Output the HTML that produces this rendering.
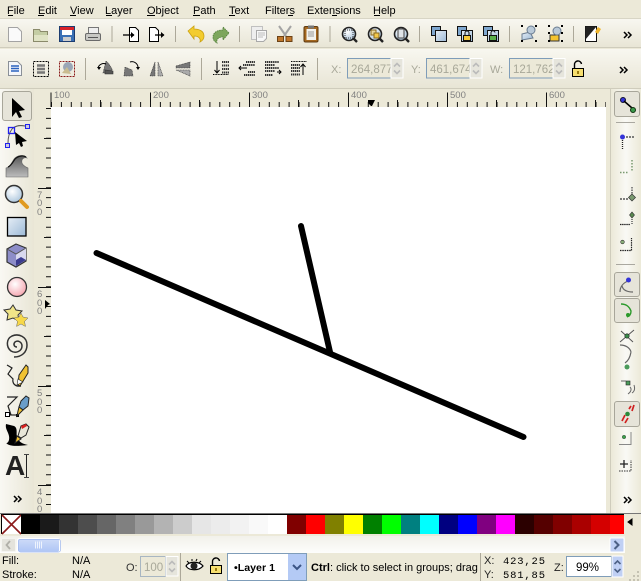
<!DOCTYPE html>
<html><head><meta charset="utf-8"><style>
html,body{margin:0;padding:0;background:#ece9d8}
svg{display:block}
text{font-family:"Liberation Sans",sans-serif;font-size:11px;fill:#000}
.g{fill:#a8a899}
.r{font-size:9.500px;fill:#808080}
.sep{stroke:#aca899;stroke-width:1}
</style></head><body>
<svg width="641" height="581" viewBox="0 0 641 581" xmlns="http://www.w3.org/2000/svg">
<defs>
<linearGradient id="bar" x1="0" y1="0" x2="0" y2="1"><stop offset="0" stop-color="#f8f7f0"/><stop offset="1" stop-color="#e8e5d5"/></linearGradient>
<linearGradient id="side" x1="0" y1="0" x2="1" y2="0"><stop offset="0" stop-color="#f9f8f3"/><stop offset="1" stop-color="#e9e6d6"/></linearGradient>
<linearGradient id="side2" x1="0" y1="0" x2="1" y2="0"><stop offset="0" stop-color="#ece9d8"/><stop offset=".5" stop-color="#f9f9f5"/><stop offset="1" stop-color="#ece9d8"/></linearGradient>
<linearGradient id="blue" x1="0" y1="0" x2="1" y2="1"><stop offset="0" stop-color="#e6eef6"/><stop offset="1" stop-color="#9cb9d6"/></linearGradient>
<linearGradient id="scroll" x1="0" y1="0" x2="0" y2="1"><stop offset="0" stop-color="#cfdcf8"/><stop offset="1" stop-color="#aec5f5"/></linearGradient>
<linearGradient id="sb" x1="0" y1="0" x2="0" y2="1"><stop offset="0" stop-color="#f2f1ea"/><stop offset="1" stop-color="#fdfdfb"/></linearGradient>
<linearGradient id="wave" x1="0" y1="0" x2="0" y2="1"><stop offset="0" stop-color="#555"/><stop offset="1" stop-color="#bdbdbd"/></linearGradient>
<radialGradient id="pink" cx=".4" cy=".35" r=".7"><stop offset="0" stop-color="#fff"/><stop offset="1" stop-color="#f5a3ad"/></radialGradient>
<radialGradient id="lens" cx=".4" cy=".35" r=".7"><stop offset="0" stop-color="#fff"/><stop offset="1" stop-color="#a9c4dc"/></radialGradient>
<g id="zoomg"><circle cx="8" cy="8" r="6.500" fill="url(#lens)" stroke="#222" stroke-width="1.600"/><path d="M12.500 12.500l3.500 3.500" stroke="#222" stroke-width="2.400"/></g>
<g id="spin"><rect x="0" y="0" width="12" height="19.500" fill="#e6e5dc" stroke="#fff"/><path d="M3 8l3-3 3 3" fill="none" stroke="#bbb" stroke-width="1.600"/><path d="M3 12l3 3 3-3" fill="none" stroke="#bbb" stroke-width="1.600"/></g>
<g id="dbl"><path d="M0 0l3 3-3 3M4 0l3 3-3 3" fill="none" stroke="#000" stroke-width="1.500"/></g>
<g id="lock"><rect x="0.500" y="7.500" width="11" height="8" fill="#f6df70" stroke="#000"/><path d="M2.500 7.500V4a3.500 3.500 0 0 1 7-1" fill="none" stroke="#000" stroke-width="1.400"/><rect x="5" y="10" width="2" height="3" fill="#9a7b10"/></g>
</defs>

<rect width="641" height="581" fill="#ece9d8"/>

<!-- menu -->
<g>
<text x="7" y="14">File</text><path d="M8 15.500h5" stroke="#000"/>
<text x="38" y="14">Edit</text><path d="M38 15.500h6" stroke="#000"/>
<text x="70" y="14">View</text><path d="M70 15.500h6" stroke="#000"/>
<text x="105" y="14">Layer</text><path d="M106 15.500h6" stroke="#000"/>
<text x="147" y="14">Object</text><path d="M147 15.500h8" stroke="#000"/>
<text x="193" y="14">Path</text><path d="M193 15.500h7" stroke="#000"/>
<text x="229" y="14">Text</text><path d="M229 15.500h6" stroke="#000"/>
<text x="265" y="14">Filters</text><path d="M288 15.500h5" stroke="#000"/>
<text x="307" y="14">Extensions</text><path d="M332 15.500h5" stroke="#000"/>
<text x="373" y="14">Help</text><path d="M374 15.500h6" stroke="#000"/>
</g>

<!-- toolbar backgrounds -->
<rect x="0" y="19" width="641" height="29" fill="url(#bar)"/>
<path d="M0 18.500h641" stroke="#d8d5c5"/><path d="M0 47.500h641" stroke="#cfccbc"/>
<rect x="0" y="49" width="641" height="39" fill="url(#bar)"/>
<path d="M0 88.500h641" stroke="#cfccbc"/>

<g class="sep">
<path d="M112 26v16M175.500 26v16M239.500 26v16M330 26v16M419.500 26v16M509.500 26v16M573.500 26v16"/>
<path d="M85.500 58v22M201.500 58v22M317.500 58v22"/>
</g>
<!-- new -->
<path d="M8.500 27.500h9l4 4v10h-13z" fill="#fafafa" stroke="#a3a3a3"/>
<!-- open -->
<path d="M33.500 29.500h6l1 2h7v10h-14z" fill="#c4cda4" stroke="#8a8a6a"/><path d="M34 35h14v6H34z" fill="#dfe3c4"/>
<!-- save -->
<rect x="59.500" y="26.500" width="15" height="15" fill="#3a6fb4" stroke="#1c3c70"/><rect x="60" y="27" width="14" height="3" fill="#d8222a"/><rect x="62" y="30" width="10" height="5" fill="#fff"/><rect x="63" y="37" width="8" height="4" fill="#ccc"/>
<!-- print -->
<rect x="88.500" y="27.500" width="10" height="7" fill="#eee" stroke="#777"/><rect x="85.500" y="33.500" width="15" height="7" rx="1.500" fill="#c8c8c4" stroke="#6a6a6a"/><path d="M88 37.500h10" stroke="#555"/>
<!-- import -->
<path d="M129.500 27.500h6l3 3v11h-9z" fill="#fff" stroke="#000"/><path d="M123 35h11" stroke="#000" stroke-width="1.300"/><path d="M131 32l3.500 3-3.500 3z" fill="#000"/>
<!-- export -->
<path d="M149.500 27.500h6l3 3v11h-9z" fill="#fff" stroke="#000"/><path d="M155 35h9" stroke="#000" stroke-width="1.300"/><path d="M161 32l3.500 3-3.500 3z" fill="#000"/>
<!-- undo -->
<path d="M188 31l6-5v3c5 0 10 2 10 7 0 3-2 5-4 6 1-3-1-6-6-6v3z" fill="#f3cc2e" stroke="#c9a010" stroke-width=".8"/>
<!-- redo -->
<path d="M229 33l-6-6v3c-5 0-10 2-10 7 0 3 2 5 4 6-1-3 1-6 6-6v3z" fill="#7da65c" stroke="#4f7c38" stroke-width=".8" stroke-dasharray="1.500 .8"/>
<!-- copy -->
<rect x="251.500" y="26.500" width="11" height="13" fill="#eee" stroke="#c0c0c0"/><path d="M256.500 30.500h10v8l-3 3h-7z" fill="#f8f8f8" stroke="#a9a9a9"/><path d="M258 33h7M258 35h7M258 37h5" stroke="#bbb"/>
<!-- cut -->
<path d="M279 26l7 10M291 26l-7 10" stroke="#a4a4a4" stroke-width="2"/><rect x="277.500" y="36.500" width="6" height="5" fill="#c0762a" stroke="#6b4216"/><rect x="286" y="36.500" width="6" height="5" fill="#c0762a" stroke="#6b4216"/>
<!-- paste -->
<rect x="304" y="26.500" width="14" height="15.500" rx="1.500" fill="#a5681f" stroke="#5e3a10"/><rect x="306.500" y="29" width="9.500" height="11" fill="#f2f2ee"/><rect x="308" y="25.500" width="6" height="3" fill="#777"/><path d="M308 32h6M308 34h6M308 36h6" stroke="#999"/>
<!-- zooms -->
<use href="#zoomg" x="341" y="26"/><rect x="345" y="30" width="8" height="8" fill="none" stroke="#333" stroke-dasharray="1 1"/>
<use href="#zoomg" x="367" y="26"/><rect x="371" y="30" width="5" height="5" fill="#e8d8a0" stroke="#8a6a20"/><rect x="374" y="33" width="5" height="5" fill="#f3c84a" stroke="#8a6a20"/>
<use href="#zoomg" x="393" y="26"/><rect x="398" y="29" width="6" height="9" fill="#dfe4e8" stroke="#444"/>
<!-- raise etc -->
<rect x="431.500" y="26.500" width="9" height="9" fill="#7fa7cf" stroke="#111"/><rect x="435.500" y="30.500" width="11" height="11" fill="url(#blue)" stroke="#111"/>
<rect x="457.500" y="26.500" width="9" height="9" fill="#7fa7cf" stroke="#111"/><rect x="461.500" y="30.500" width="11" height="11" fill="url(#blue)" stroke="#111"/><rect x="463.500" y="35.500" width="7" height="5" fill="#f6c93a" stroke="#111"/><path d="M465 35v-2a2 2 0 0 1 4 0v2" fill="none" stroke="#111"/>
<rect x="483.500" y="26.500" width="9" height="9" fill="#7fa7cf" stroke="#111"/><rect x="487.500" y="30.500" width="11" height="11" fill="url(#blue)" stroke="#111"/><rect x="489.500" y="35.500" width="7" height="5" fill="#5cb04a" stroke="#111"/><path d="M491 35v-2a2 2 0 0 1 4-.5" fill="none" stroke="#111"/>
<!-- group -->
<path d="M522 34l8-2 3 6-11 2z" fill="url(#blue)" stroke="#6a7c90"/><circle cx="531" cy="30" r="4" fill="#b9c9d8" stroke="#6a7c90"/>
<path d="M521 26h2M535 26h2M521 41h2M535 41h2" stroke="#000" stroke-width="2"/>
<path d="M550 35h9v6h-9z" fill="#f4c430" stroke="#333"/><circle cx="557" cy="31" r="4" fill="#b9c9d8" stroke="#6a7c90"/>
<path d="M548 26h2M561 26h2M548 41h2M561 41h2M548 33h2M561 33h2" stroke="#000" stroke-width="2"/>
<!-- prefs -->
<rect x="585.500" y="26.500" width="11" height="15" fill="#fff" stroke="#111"/>
<path d="M585.500 26.500h11l-11 13z" fill="#222"/><path d="M598 27l3 2-3 5-3-2z" fill="#f1b62d"/>
<use href="#dbl" x="624" y="32"/>

<!-- toolbar 2 -->
<path d="M8.500 61.500h9l4 4v10h-13z" fill="#f4f6fa" stroke="#8a9098"/><path d="M11 66h8M11 68.500h8M11 71h8" stroke="#2a62c0" stroke-width="1.400"/>
<rect x="33.500" y="61.500" width="15" height="15" fill="none" stroke="#000" stroke-dasharray="2 1"/><path d="M37 65.500h8M37 69h8M37 72.500h8" stroke="#777" stroke-width="2.400"/>
<rect x="59.500" y="61.500" width="15" height="15" fill="none" stroke="#8a1a1a" stroke-dasharray="2 1"/><circle cx="68" cy="67" r="5" fill="#9aa6b6"/><path d="M62 73l5-6 4 7z" fill="#c9bc90"/>
<!-- rotate/flip -->
<g fill="#777" stroke="#333" stroke-width=".6"><path d="M103 73l3-12 3 3 3 5v4z" stroke-dasharray="1 .6"/><path d="M105 74h8v-3l-8-1z" fill="#555"/>
<path d="M124 76l1-9 7 3 1 6z" stroke-dasharray="1 .6"/>
<path d="M155 62v14h-5z" stroke-dasharray="1 .6"/><path d="M158 62v14h5z" fill="#aaa" stroke-dasharray="1 .6"/>
<path d="M176 66l14-4v6h-14z" stroke-dasharray="1 .6"/><path d="M176 70l14 6v-6z" fill="#aaa" stroke-dasharray="1 .6"/></g>
<path d="M98 68a6 6 0 0 1 8-4" fill="none" stroke="#000"/><path d="M97 67l4 0-2 3z"/>
<path d="M130 62a6 6 0 0 1 8 6" fill="none" stroke="#000"/><path d="M136 67h4l-2 3z"/>
<!-- align -->
<g stroke="#000" stroke-width="1" fill="none">
<path d="M217 61v12M214.500 70l2.500 3 2.500-3"/><path d="M213 74.500h16" stroke-dasharray="1 .6"/>
<path d="M239 68h8M241 66l-2 2 2 2"/>
<path d="M303 64v11M300.500 67l2.500-3 2.500 3"/><path d="M291 61.500h16" stroke-dasharray="1 .6"/>
<path d="M277 72h4M279 70l2 2-2 2"/>
</g>
<g stroke="#333" stroke-width="2" stroke-dasharray="1.300 .6">
<path d="M222 62h7M222 65.500h7M222 69h7M222 72.500h7"/>
<path d="M246 62h9M243 65h12M248 72h7M244 75h11"/>
<path d="M265 62h14M265 65h10M265 68h14M265 71h10M265 75h8"/>
<path d="M291 65h9M291 68h9M291 71h9M291 74.500h9"/>
</g>
<!-- XYW -->
<text class="g" x="331" y="73">X:</text><text class="g" x="411" y="73">Y:</text><text class="g" x="490" y="73">W:</text>
<g fill="#ece9d8" stroke="#7f9db9">
<rect x="347.500" y="58.500" width="44" height="19.500"/><rect x="426.500" y="58.500" width="44" height="19.500"/><rect x="509.500" y="58.500" width="44" height="19.500"/>
</g>
<text class="g" x="351" y="73" style="font-size:11.500px">264,877</text>
<text class="g" x="430" y="73" style="font-size:11.500px">461,674</text>
<text class="g" x="513" y="73" style="font-size:11.500px">121,762</text>
<use href="#spin" x="391" y="58.500"/><use href="#spin" x="470" y="58.500"/><use href="#spin" x="553" y="58.500"/>
<use href="#lock" x="572" y="61"/>
<use href="#dbl" x="620" y="67"/>

<!-- left toolbox -->
<rect x="0" y="89" width="34" height="425" fill="url(#side)"/>
<rect x="2.500" y="91.500" width="29" height="29" rx="2.500" fill="#e6e4d9" stroke="#a8a69a"/>
<path d="M12 98v19l4-5 3 6 3-1-3-6 6-1z" fill="#000"/>
<!-- node -->
<path d="M8 143c0-6 1-10 4-14 3-3 8-4 13-3" fill="none" stroke="#555"/>
<rect x="8.500" y="127.500" width="6" height="6" fill="none" stroke="#22e" stroke-width="1.300"/><rect x="25.500" y="124.500" width="4" height="4" fill="#ccd" stroke="#22e"/><rect x="5.500" y="143.500" width="4" height="4" fill="#ccd" stroke="#22e"/>
<path d="M15 132l12 9-5 1 1 4-2 1-2-4-3 2z" fill="#000"/>
<!-- tweak -->
<path d="M6 177V168C10 167 12 162 14 159C17 155 24 154 27 158C24 157 21 159 22 163C23 166 26 167 28 168V177z" fill="url(#wave)" stroke="#666" stroke-width=".6"/>
<path d="M8 167c3-1 5-5 7-8 3-3 8-4 11-2" fill="none" stroke="#111" stroke-width="1.200"/>
<!-- zoom -->
<circle cx="14" cy="194" r="8.500" fill="url(#lens)" stroke="#333" stroke-width="1.500"/><path d="M21 201l6 6" stroke="#e09a20" stroke-width="4" stroke-linecap="round"/>
<!-- rect -->
<rect x="7.500" y="217.500" width="18.500" height="18.500" fill="url(#blue)" stroke="#000" stroke-width="1.300"/>
<!-- 3d -->
<path d="M16 244l10 4v13l-10 6-9-5v-13z" fill="#8d8dc8" stroke="#333" stroke-width="1.200"/><path d="M16 254v12l10-6v-12z" fill="#d9d9ef"/><path d="M16 266l10-6-5-3-5 3z" fill="#3c3c90"/><path d="M7 249l9 5 10-6" fill="none" stroke="#555"/>
<!-- circle -->
<circle cx="17" cy="287" r="9.500" fill="url(#pink)" stroke="#333" stroke-width="1.300"/>
<!-- star -->
<path d="M13 305l3 5 6 1-4 4 1 6-6-3-6 2 1-6-4-4 6-1z" fill="#f0e488" stroke="#333"/>
<path d="M21 313l2 4 5 1-3.500 3.500 1 5-4.500-2.500-4.500 2.500 1-5-3.500-3.500 5-1z" fill="#f7d84a" stroke="#666" stroke-width=".5"/>
<!-- spiral -->
<path d="M17 347c-3 0-4-3-2-5 3-2 7 0 7 4 0 5-6 8-11 5-5-4-5-12 1-15 7-3 15 1 15 9 0 7-5 12-13 12" fill="none" stroke="#333" stroke-width="1.500"/>
<!-- pencil -->
<path d="M7 365l5 3-4 6 5 5c-1 5 3 8 8 7" fill="none" stroke="#222" stroke-width="1.200"/>
<path d="M19 375l7-10 2 2 0 6-8 13-2-1z" fill="#f1c232" stroke="#222"/><path d="M17 385l1-6 5 3z" fill="#fff" stroke="#222" stroke-width=".6"/>
<!-- pen -->
<path d="M7 397h10l-9 9 3 9" fill="none" stroke="#222" stroke-width="1.200"/><rect x="5.500" y="412.500" width="4" height="4" fill="#fff" stroke="#000"/><path d="M10 415h7" stroke="#000"/><rect x="16" y="414" width="3" height="3"/>
<path d="M21 401l5-5 3 2-1 8-5 4-4-3z" fill="#6a9dc9" stroke="#222"/><path d="M19 407l4 3-6 6 1-5z" fill="#f1c232" stroke="#222"/>
<!-- calligraphy -->
<path d="M6 424c-1 5 2 7 3 12 1 5-2 8-3 7 4 4 12 3 22 2-6-1-10-4-11-8-1-4 1-9-3-11z" fill="#000"/>
<path d="M21 426l5-2 3 3-3 8-5 3-3-2z" fill="#e8e6d8" stroke="#222"/><path d="M21 426l5-2 1 2-5 3z" fill="#d82020"/><path d="M17 436l4 3-6 4z" fill="#f1c232" stroke="#222"/>
<!-- text -->
<text x="5" y="475" style="font-size:28px;font-weight:bold;fill:#222">A</text>
<path d="M26.500 455v22" stroke="#222"/><path d="M24 454.500h5M24 477.500h5" stroke="#444"/>
<use href="#dbl" x="14" y="496"/>

<!-- h ruler -->
<rect x="34" y="89" width="577" height="18" fill="#ece9d8"/>
<g stroke="#111">
<path d="M51 104.500H606" stroke-width="5" stroke-dasharray="1 8.900" fill="none"/>
<path d="M51 92.500v14.500M150.500 92.500v14.500M249.500 92.500v14.500M348.500 92.500v14.500M447.500 92.500v14.500M546.500 92.500v14.500"/>
<path d="M100.500 100v7M199.500 100v7M298.500 100v7M397.500 100v7M496.500 100v7M595.500 100v7"/>
</g>
<text class="r" x="54" y="98">100</text><text class="r" x="153" y="98">200</text><text class="r" x="252" y="98">300</text><text class="r" x="351" y="98">400</text><text class="r" x="450" y="98">500</text><text class="r" x="549" y="98">600</text>
<path d="M368 100h7l-3 6h-1l-3-3z" fill="#000"/>

<!-- v ruler -->
<rect x="34" y="107" width="17" height="407" fill="#ece9d8"/>
<g stroke="#111" fill="none">
<path d="M48.500 108V513" stroke-width="5" stroke-dasharray="1 8.900"/>
<path d="M38 188.500h13M38 287.500h13M38 386.500h13M38 485.500h13"/>
<path d="M44 138.500h7M44 237.500h7M44 336.500h7M44 435.500h7"/>
</g>
<text class="r" x="37" y="198">7</text><text class="r" x="37" y="206">0</text><text class="r" x="37" y="215">0</text>
<text class="r" x="37" y="297">6</text><text class="r" x="37" y="306">0</text><text class="r" x="37" y="314">0</text>
<text class="r" x="37" y="396">5</text><text class="r" x="37" y="405">0</text><text class="r" x="37" y="413">0</text>
<text class="r" x="37" y="495">4</text><text class="r" x="37" y="504">0</text><text class="r" x="37" y="512">0</text>
<path d="M45 300l5 4-2 1-3 4z" fill="#000"/>

<!-- canvas -->
<rect x="51" y="107" width="555" height="406" fill="#fff"/>
<g stroke="#000" stroke-width="6" stroke-linecap="round" fill="none">
<path d="M96.500 253L523.500 437"/><path d="M301 226L330 352"/>
</g>

<!-- right side -->
<rect x="606" y="89" width="5" height="425" fill="#ece9d8"/>
<path d="M610.500 89v425" stroke="#cfccbc"/>
<rect x="611" y="89" width="30" height="425" fill="url(#side2)"/>
<g fill="#e6e4d9" stroke="#a8a69a">
<rect x="614.500" y="91.500" width="25" height="25" rx="2.500"/>
<rect x="614.500" y="272.500" width="25" height="24" rx="2.500"/>
<rect x="614.500" y="298.500" width="25" height="24" rx="2.500"/>
<rect x="614.500" y="401.500" width="25" height="25" rx="2.500"/>
</g>
<path d="M616 122.500h19M616 264.500h19" stroke="#aaa8a0"/>
<!-- snap icons -->
<circle cx="623" cy="100" r="2.500" fill="#3434d8" stroke="#113"/><path d="M624 101l8 7" stroke="#000" stroke-width="1.500"/><circle cx="633" cy="110" r="2.500" fill="#3a9a4a" stroke="#131"/>
<circle cx="622.500" cy="137" r="2.500" fill="#3434d8"/><path d="M626 137h9" stroke="#555" stroke-width="1.600" stroke-dasharray="2 1"/><path d="M622.500 140v9" stroke="#222" stroke-width="1.300" stroke-dasharray="1 1"/>
<path d="M620 172.500h9M632 160v12" stroke="#7a9a70" stroke-width="1.500" stroke-dasharray="1.500 1.500"/>
<path d="M620 199h9" stroke="#555" stroke-width="1.500" stroke-dasharray="2 1"/><path d="M632 187v7" stroke="#666" stroke-width="1.500" stroke-dasharray="1.500 1"/><path d="M632 194l3.500 3.500-3.500 3.500-3.500-3.500z" fill="#7a9a70" stroke="#333" stroke-width=".7"/>
<path d="M620 224.500h10" stroke="#222" stroke-width="1.200" stroke-dasharray="1.500 .6"/><path d="M632 212l2.500 3-2.500 3-2.500-3z" fill="#5a8a50" stroke="#333" stroke-width=".6"/><path d="M632 219v5" stroke="#555" stroke-width="1.400" stroke-dasharray="1 1"/>
<circle cx="622.500" cy="242" r="1.800" fill="#8ab07a" stroke="#333" stroke-width=".6"/><path d="M620 250.500h11.500V238" fill="none" stroke="#222" stroke-width="1.200" stroke-dasharray="1.500 .8"/>
<path d="M620 292c0-5 3-9 8-11M622 286c1 4 5 6 11 6" fill="none" stroke="#666" stroke-width="1.200"/><circle cx="628.500" cy="280" r="2.500" fill="#3434d8"/>
<path d="M621 304c5 0 8 2 10 7 0 3-1 5-4 6" fill="none" stroke="#2c9a2c" stroke-width="1.400"/><circle cx="628" cy="315" r="2" fill="#2c9a2c"/>
<path d="M620 342l14-12M621 331l12 11" stroke="#555"/><circle cx="627" cy="336" r="2.200" fill="#3a8a4a" stroke="#222" stroke-width=".6"/>
<path d="M620 345c6 0 10 3 11 7M631 352c-1 6-3 9-6 11" fill="none" stroke="#666" stroke-width="1.200"/><circle cx="627" cy="367" r="2.500" fill="#4a9a5a"/>
<rect x="626" y="381" width="4" height="4" fill="#4a9a5a" stroke="#222" stroke-width=".6"/><path d="M621 381h5M630 387c2 2 1 5-2 7M634 385c1 3 1 6-2 8" fill="none" stroke="#666"/>
<path d="M622 421l3-6M632 411l2-6M625 423l3-5M629 409l2-3" stroke="#d02020" stroke-width="1.700"/><circle cx="627.500" cy="414" r="2.300" fill="#2a8a3a"/>
<circle cx="624" cy="437" r="1.800" fill="#3aa04a" stroke="#333" stroke-width=".4"/><path d="M619 444.500h12V432" fill="none" stroke="#888"/>
<path d="M620 464h8M624 460v8" stroke="#222" stroke-width="1.300"/><path d="M619 471h12v-11" fill="none" stroke="#333" stroke-dasharray="1.500 1"/>
<use href="#dbl" x="624" y="497"/>

<!-- palette -->
<rect x="0" y="513" width="641" height="1" fill="#777"/>
<rect x="0" y="514" width="641" height="22" fill="#ece9d8"/>
<g>
<rect x="1" y="514" width="623" height="20" fill="#000"/>
<rect x="2" y="515" width="19" height="19" fill="#fff"/>
<path d="M2 515l19 19M21 515l-19 19" stroke="#8b1a1a" stroke-width="1.600"/>
<rect x="21" y="515" width="19" height="19" fill="#000"/><rect x="40" y="515" width="19" height="19" fill="#1a1a1a"/><rect x="59" y="515" width="19" height="19" fill="#333"/><rect x="78" y="515" width="19" height="19" fill="#4d4d4d"/><rect x="97" y="515" width="19" height="19" fill="#666"/><rect x="116" y="515" width="19" height="19" fill="#808080"/><rect x="135" y="515" width="19" height="19" fill="#999"/><rect x="154" y="515" width="19" height="19" fill="#b3b3b3"/><rect x="173" y="515" width="19" height="19" fill="#ccc"/><rect x="192" y="515" width="19" height="19" fill="#e6e6e6"/><rect x="211" y="515" width="19" height="19" fill="#ececec"/><rect x="230" y="515" width="19" height="19" fill="#f2f2f2"/><rect x="249" y="515" width="19" height="19" fill="#f9f9f9"/><rect x="268" y="515" width="19" height="19" fill="#fff"/><rect x="287" y="515" width="19" height="19" fill="#800000"/><rect x="306" y="515" width="19" height="19" fill="#f00"/><rect x="325" y="515" width="19" height="19" fill="#808000"/><rect x="344" y="515" width="19" height="19" fill="#ff0"/><rect x="363" y="515" width="19" height="19" fill="#008000"/><rect x="382" y="515" width="19" height="19" fill="#0f0"/><rect x="401" y="515" width="19" height="19" fill="#008080"/><rect x="420" y="515" width="19" height="19" fill="#0ff"/><rect x="439" y="515" width="19" height="19" fill="#000080"/><rect x="458" y="515" width="19" height="19" fill="#00f"/><rect x="477" y="515" width="19" height="19" fill="#800080"/><rect x="496" y="515" width="19" height="19" fill="#f0f"/><rect x="515" y="515" width="19" height="19" fill="#2b0000"/><rect x="534" y="515" width="19" height="19" fill="#550000"/><rect x="553" y="515" width="19" height="19" fill="#800000"/><rect x="572" y="515" width="19" height="19" fill="#aa0000"/><rect x="591" y="515" width="19" height="19" fill="#d40000"/><rect x="610" y="515" width="14" height="19" fill="#f00"/>
</g>
<path d="M632 519v6l-4-3z" fill="#000" stroke="#000"/>

<!-- h scrollbar -->
<rect x="0" y="536" width="625" height="17" fill="url(#sb)"/>
<rect x="1.500" y="538.500" width="14" height="13" rx="1" fill="#e4e3dc" stroke="#f4f4f0"/><path d="M10 541l-3.500 4 3.500 4" fill="none" stroke="#b0afa8" stroke-width="1.800"/>
<rect x="17.500" y="538.500" width="42" height="13.500" rx="2" fill="url(#scroll)" stroke="#fff"/><rect x="18.500" y="539.500" width="42" height="12.500" rx="2" fill="none" stroke="#9db7ee" stroke-width=".7"/>
<path d="M35.500 541.500v7M37.500 541.500v7M39.500 541.500v7M41.500 541.500v7" stroke="#eef3fd"/>
<rect x="610" y="538" width="14" height="14" rx="1" fill="#c0d0f4" stroke="#fff"/><path d="M614.500 541l4 4-4 4" fill="none" stroke="#4d6185" stroke-width="2"/>

<!-- status -->
<rect x="0" y="553" width="641" height="28" fill="#ece9d8"/>
<text x="2" y="564">Fill:</text><text x="2" y="578">Stroke:</text>
<text x="72" y="564">N/A</text><text x="72" y="578">N/A</text>
<text x="126" y="571" style="fill:#333">O:</text>
<rect x="140.500" y="556.500" width="25" height="20" fill="#ece9d8" stroke="#a8b6c2"/>
<text class="g" x="144" y="571" style="font-size:11.500px">100</text>
<use href="#spin" x="166" y="556.500"/>
<path d="M180.500 553v28" class="sep"/>
<path d="M186 566c3-5 13-5 17 0-4 5-14 5-17 0z" fill="#fff" stroke="#000" stroke-width="1.200"/><circle cx="194" cy="566" r="3.500" fill="#222"/><path d="M187 561l2 2M192 559v2M197 559l-1 2M201 561l-2 2" stroke="#000"/>
<use href="#lock" x="210" y="558"/>
<rect x="227.500" y="553.500" width="79" height="27" fill="#fff" stroke="#7f9db9"/>
<text x="234" y="571" style="font-weight:bold;font-size:10px" textLength="41" lengthAdjust="spacingAndGlyphs">•Layer 1</text>
<rect x="288" y="554" width="18" height="26" fill="#b4caf5"/><path d="M293 565l4 4 4-4" fill="none" stroke="#3b5585" stroke-width="2"/>
<text x="311" y="571"><tspan style="font-weight:bold">Ctrl</tspan>: click to select in groups; drag</text>
<path d="M480.500 553v28" class="sep"/>
<text x="484" y="564" style="fill:#222">X:</text><text x="484" y="578" style="fill:#222">Y:</text>
<text x="503" y="564" style="font-family:'Liberation Mono',monospace;font-size:10.500px" textLength="42">423,25</text>
<text x="503" y="578" style="font-family:'Liberation Mono',monospace;font-size:10.500px" textLength="42">581,85</text>
<text x="554" y="571" style="fill:#222">Z:</text>
<rect x="566.500" y="556.500" width="45" height="20" fill="#fff" stroke="#7f9db9"/>
<text x="576" y="571" style="font-size:11.500px">99%</text>
<rect x="612" y="556" width="11" height="21" fill="#c0d0f4" stroke="#fff"/><path d="M614.500 564l3-3 3 3M614.500 569l3 3 3-3" fill="none" stroke="#4d6185" stroke-width="1.600"/>
<g fill="#c5c2b2"><rect x="637" y="571" width="2" height="2"/><rect x="633" y="575" width="2" height="2"/><rect x="637" y="575" width="2" height="2"/><rect x="629" y="579" width="2" height="2"/><rect x="633" y="579" width="2" height="2"/><rect x="637" y="579" width="2" height="2"/></g>
</svg>
</body></html>
